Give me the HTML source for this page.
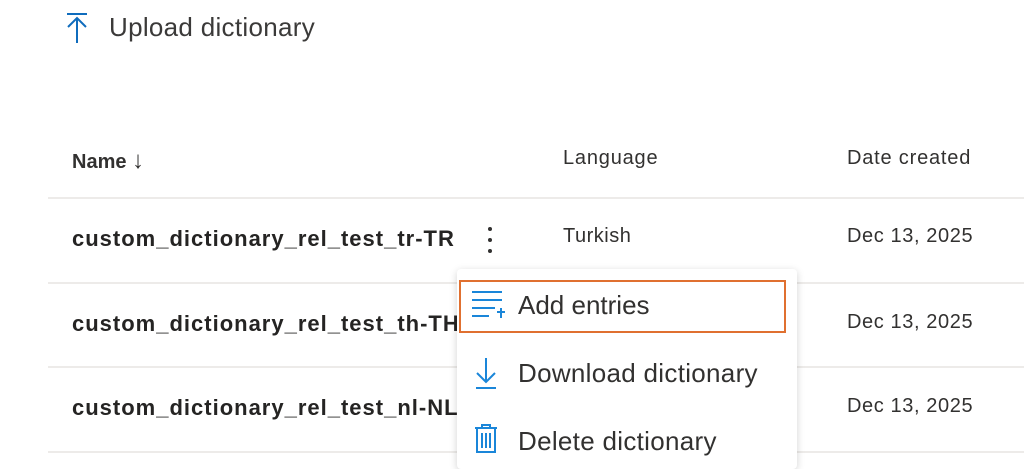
<!DOCTYPE html><html><head><style>
body{margin:0;width:1024px;height:464px;overflow:hidden;background:#fff;font-family:"Liberation Sans",sans-serif;color:#323130;position:relative}
.a{position:absolute;white-space:nowrap}
.line{position:absolute;left:48px;width:976px;height:2px;background:#edebe9}
.n{font-weight:bold;font-size:22px;letter-spacing:1px;color:#252423;left:72px}
.d{font-size:20px;letter-spacing:0.6px;left:847px}
</style></head><body>
<svg class="a" style="left:66px;top:12px" width="22" height="32"><path d="M1 2H21M11 6V31M2 15L11 6L20 15" stroke="#0f6cbd" stroke-width="2" fill="none"/></svg>
<div class="a" style="left:109px;top:12px;font-size:26px;letter-spacing:0.3px;color:#3b3a39">Upload dictionary</div>
<div class="a" style="left:72px;top:147px;font-size:20px;font-weight:bold;color:#323130">Name <span style="font-weight:normal;font-size:24px">↓</span></div>
<div class="a" style="left:563px;top:147px;font-size:20px;letter-spacing:0.8px">Language</div>
<div class="a" style="left:847px;top:147px;font-size:20px;letter-spacing:0.8px">Date created</div>
<div class="line" style="top:197px"></div>
<div class="line" style="top:282px"></div>
<div class="line" style="top:366px"></div>
<div class="line" style="top:451px"></div>
<div class="a n" style="top:226px">custom_dictionary_rel_test_tr-TR</div>
<div class="a n" style="top:311px">custom_dictionary_rel_test_th-TH</div>
<div class="a n" style="top:395px">custom_dictionary_rel_test_nl-NL</div>
<svg class="a" style="left:486px;top:224px" width="8" height="32"><circle cx="4" cy="5" r="2" fill="#323130"/><circle cx="4" cy="16" r="2" fill="#323130"/><circle cx="4" cy="27" r="2" fill="#323130"/></svg>
<div class="a" style="left:563px;top:225px;font-size:20px;letter-spacing:0.5px">Turkish</div>
<div class="a d" style="top:225px">Dec 13, 2025</div>
<div class="a d" style="top:311px">Dec 13, 2025</div>
<div class="a d" style="top:395px">Dec 13, 2025</div>
<div class="a" style="left:457px;top:269px;width:340px;height:200px;background:#fff;border-radius:4px;box-shadow:0 2px 8px rgba(0,0,0,.18)"></div>
<div class="a" style="left:459px;top:280px;width:323px;height:49px;border:2px solid #e07030"></div>
<svg class="a" style="left:471px;top:290px" width="34" height="30"><path d="M1 2H31M1 10H31M1 18H24M1 26H18M26 22H34M30 18V28" stroke="#1a86d9" stroke-width="2" fill="none"/></svg>
<div class="a" style="left:518px;top:290px;font-size:26px;color:#323130">Add entries</div>
<svg class="a" style="left:475px;top:357px" width="22" height="32"><path d="M11 1V25M2 16L11 25L20 16M1 31H21" stroke="#1a86d9" stroke-width="2" fill="none"/></svg>
<div class="a" style="left:518px;top:358px;font-size:26px;letter-spacing:0.3px;color:#323130">Download dictionary</div>
<svg class="a" style="left:474px;top:424px" width="24" height="30"><path d="M1 4H23M8 4V1H16V4M3 4V28H21V4M8 9V24M12 9V24M16 9V24" stroke="#1a86d9" stroke-width="2" fill="none"/></svg>
<div class="a" style="left:518px;top:426px;font-size:26px;letter-spacing:0.3px;color:#323130">Delete dictionary</div>
</body></html>
